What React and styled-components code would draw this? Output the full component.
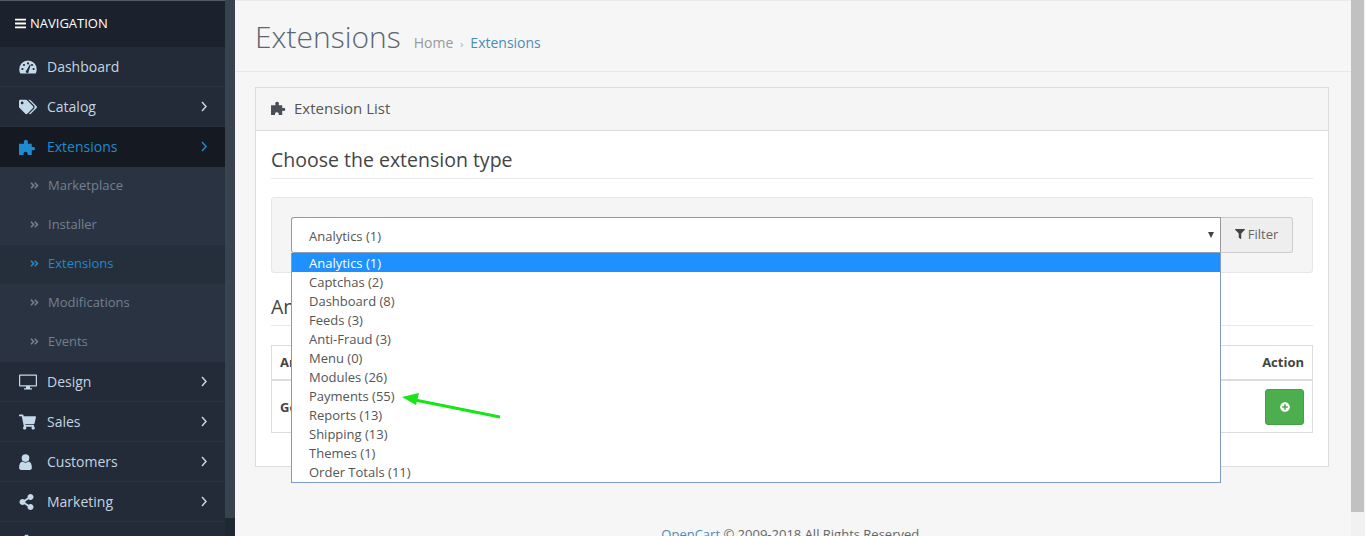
import React from 'react';
import styled, { createGlobalStyle } from 'styled-components';
import { FaTags, FaShoppingCart, FaShareAlt, FaCog, FaBars, FaAngleDoubleRight, FaFilter, FaPlusCircle } from 'react-icons/fa';

const GlobalStyle = createGlobalStyle`
  html, body {
    margin: 0;
    padding: 0;
    height: 536px;
    overflow: hidden;
    background: #f6f6f6;
    font-family: "Open Sans", sans-serif;
    font-size: 12px;
    color: #666;
  }
`;

const Page = styled.div`
  display: flex;
  width: 1365px;
  height: 536px;
  overflow: hidden;
`;

const Sidebar = styled.aside`
  width: 235px;
  flex: none;
  display: flex;
  background: #1f2733;
`;

const SideColumn = styled.nav`
  width: 225px;
  flex: none;
`;

const SideScroll = styled.div`
  width: 10px;
  height: 518px;
  background: #38434f;
`;

const NavHead = styled.div`
  height: 47px;
  display: flex;
  align-items: center;
  gap: 4px;
  padding: 0 0 2px 15px;
  box-sizing: border-box;
  background: #1b222d;
  border-top: 1px solid #555b63;
  color: #fff;
  font-size: 13px;
  svg { width: 11px; height: 13px; }
`;

const MenuItem = styled.div`
  height: 40px;
  box-sizing: border-box;
  display: flex;
  align-items: center;
  padding: 0 18px 0 19px;
  font-size: 14px;
  background: ${p => (p.$active ? '#151a22' : '#222b37')};
  border-bottom: 1px solid ${p => (p.$active ? '#151a22' : '#293340')};
  color: ${p => (p.$active ? '#1e8ad0' : '#c4d4e2')};
`;

const MenuIcon = styled.span`
  width: 28px;
  flex: none;
  display: flex;
  align-items: center;
  color: ${p => (p.$active ? '#1e8ad0' : '#c4d9ea')};
  svg { width: ${p => p.$width || 18}px; height: 16px; }
`;

const MenuLabel = styled.span`
  flex: 1;
`;

const SubItem = styled.div`
  height: 39px;
  box-sizing: border-box;
  display: flex;
  align-items: center;
  gap: 9px;
  padding: 0 0 3px 30px;
  font-size: 13px;
  background: ${p => (p.$active ? '#252e3b' : '#2a3342')};
  color: ${p => (p.$active ? '#1e8ad0' : '#73808f')};
  svg { width: 9px; height: 11px; }
`;

const Main = styled.main`
  flex: 1;
  min-width: 0;
  display: flex;
  flex-direction: column;
`;

const Header = styled.header`
  height: 71px;
  flex: none;
  box-sizing: border-box;
  padding: 15px 0 0 20px;
  display: flex;
  align-items: baseline;
  border-top: 1px solid #eaeaea;
  gap: 13px;
`;

const Title = styled.h1`
  margin: 0;
  font-size: 30px;
  line-height: 42px;
  font-weight: 300;
  color: #5c6670;
`;

const Crumbs = styled.div`
  display: flex;
  align-items: baseline;
  gap: 7px;
  font-size: 14px;
  color: #999;
`;

const CrumbLink = styled.a`
  color: #4c8cb8;
`;

const Sep = styled.span`
  font-size: 10px;
  color: #aaa;
`;

const Content = styled.div`
  flex: 1;
  border-top: 1px solid #e8e8e8;
  padding: 15px 36px 0 20px;
`;

const Panel = styled.section`
  height: 380px;
  box-sizing: border-box;
  border: 1px solid #dcdcdc;
  background: #fff;
  position: relative;
`;

const PanelHead = styled.div`
  height: 43px;
  box-sizing: border-box;
  display: flex;
  align-items: center;
  gap: 8px;
  padding: 0 0 2px 15px;
  background: #f5f5f5;
  border-bottom: 1px solid #dcdcdc;
  font-size: 15px;
  color: #555;
  svg { width: 15px; height: 14px; color: #4a4f57; }
`;

const PanelBody = styled.div`
  padding: 15px 15px 0;
`;

const SectionTitle = styled.h3`
  margin: 0;
  height: 33px;
  box-sizing: border-box;
  font-size: 19.5px;
  line-height: 27px;
  font-weight: 400;
  color: #444;
  border-bottom: 1px solid #e8e8e8;
`;

const Well = styled.div`
  margin-top: 18px;
  height: 76px;
  box-sizing: border-box;
  padding: 19px;
  display: flex;
  background: #f5f5f5;
  border: 1px solid #e6e6e6;
  border-radius: 3px;
`;

const SelectWrap = styled.div`
  width: 930px;
  flex: none;
  position: relative;
`;

const SelectBox = styled.div`
  height: 36px;
  box-sizing: border-box;
  display: flex;
  align-items: center;
  justify-content: space-between;
  padding: 2px 6px 0 17px;
  background: #fff;
  border: 1px solid #999;
  border-bottom-color: #8f9fb8;
  border-radius: 3px 0 0 3px;
  color: #555;
  font-size: 13px;
`;

const Caret = styled.svg`
  width: 6px;
  height: 6px;
  margin-bottom: 2px;
  color: #444;
`;

const OptionList = styled.ul`
  position: absolute;
  top: 36px;
  left: 0;
  right: 0;
  z-index: 5;
  margin: 0;
  padding: 0 0 1px;
  list-style: none;
  background: #fff;
  border: 1px solid #7f9bc4;
  border-top: 0;
`;

const Option = styled.li`
  height: 19px;
  line-height: 21px;
  padding-left: 17px;
  font-size: 13px;
  color: ${p => (p.$selected ? '#fff' : '#555')};
  background: ${p => (p.$selected ? '#1e90ff' : 'transparent')};
`;

const FilterButton = styled.button`
  width: 72px;
  height: 36px;
  padding: 0 0 2px;
  display: flex;
  align-items: center;
  justify-content: center;
  gap: 3px;
  background: #eeeeee;
  border: 1px solid #ccc;
  border-left: 0;
  border-radius: 0 3px 3px 0;
  font-family: inherit;
  font-size: 13px;
  color: #666;
  svg { width: 10px; height: 10px; color: #444; }
`;

const SubTitle = styled(SectionTitle)`
  margin-top: 20px;
`;

const Table = styled.div`
  margin-top: 19px;
  border: 1px solid #ddd;
`;

const TableHead = styled.div`
  height: 35px;
  box-sizing: border-box;
  display: flex;
  align-items: center;
  justify-content: space-between;
  padding: 0 8px 2px;
  border-bottom: 2px solid #ddd;
  font-weight: 700;
  font-size: 13px;
  color: #444;
`;

const TableRow = styled.div`
  height: 51px;
  box-sizing: border-box;
  display: flex;
  align-items: center;
  justify-content: space-between;
  padding: 1px 8px 0;
  font-weight: 700;
  font-size: 13px;
  color: #444;
`;

const AddButton = styled.button`
  width: 39px;
  height: 36px;
  padding: 0;
  display: flex;
  align-items: center;
  justify-content: center;
  background: #4cae4c;
  border: 1px solid #43a047;
  border-radius: 3px;
  color: #fff;
  svg { width: 10px; height: 10px; }
`;

const Annotation = styled.svg`
  position: absolute;
  left: 395px;
  top: 390px;
  z-index: 6;
`;

const Footer = styled.footer`
  margin-top: 59px;
  text-align: center;
  font-size: 13px;
  line-height: 17px;
  color: #666;
  a { color: #4c8cb8; text-decoration: underline; }
`;

const ScrollTrack = styled.div`
  position: absolute;
  left: 1351px;
  top: 0;
  width: 14px;
  height: 536px;
  background: #f1f1f1;
  z-index: 7;
`;

const ScrollThumb = styled.div`
  width: 13px;
  height: 512px;
  background: #c1c1c1;
`;

const Chevron = styled.svg`
  width: 6px;
  height: 11px;
  fill: none;
  stroke: currentColor;
  stroke-width: 1.5;
`;

const ChevronIcon = () => (
  <Chevron viewBox="0 0 6 11"><path d="M1 1l4 4.5-4 4.5" /></Chevron>
);

const PuzzleIcon = () => (
  <svg viewBox="0 0 16 15" fill="currentColor">
    <path d="M0 4.5H4.7V3.6A2 2 0 1 1 8.3 3.6V4.5H12V7.5H13a1.6 1.6 0 1 1 0 3H12V15H8.2V13.5a2 2 0 0 0-3.9 0V15H0Z" />
  </svg>
);

const GaugeIcon = () => (
  <svg viewBox="0 0 18 14" fill="currentColor">
    <path d="M9 .5A8.7 8.7 0 0 0 .3 9.2c0 1.8.4 3.2 1.2 4.3h15c.8-1.1 1.2-2.5 1.2-4.3A8.7 8.7 0 0 0 9 .5z" />
    <g fill="#222b37">
      <circle cx="3.4" cy="9" r="1.1" />
      <circle cx="5" cy="5" r="1.1" />
      <circle cx="9" cy="3.4" r="1.1" />
      <circle cx="13" cy="5" r="1.1" />
      <circle cx="14.6" cy="9" r="1.1" />
      <path d="M7.6 10.2L10.8 4.6l.9.4-2 6.2a1.5 1.5 0 1 1-2.1-1z" />
    </g>
  </svg>
);

const MonitorIcon = () => (
  <svg viewBox="0 0 18 15" fill="currentColor" fillRule="evenodd">
    <path d="M1 0h16a1 1 0 0 1 1 1v10a1 1 0 0 1-1 1h-6v1.8h2V15H5v-1.2h2V12H1a1 1 0 0 1-1-1V1a1 1 0 0 1 1-1zM1.2 1.2v9.6h15.6V1.2z" />
  </svg>
);

const PersonIcon = () => (
  <svg viewBox="0 0 12 15" fill="currentColor">
    <circle cx="6" cy="3.8" r="3.6" />
    <path d="M0 13c0-3.5 1-5.500 3-6 .8.7 1.800 1.100 3 1.100s2.200-.4 3-1.100c2 .5 3 2.500 3 6 0 1.300-.9 2-2 2H2c-1.100 0-2-.7-2-2z" />
  </svg>
);

const mainMenu = [
  { label: 'Design', icon: <MonitorIcon /> },
  { label: 'Sales', icon: <FaShoppingCart />, width: 17 },
  { label: 'Customers', icon: <PersonIcon />, width: 13 },
  { label: 'Marketing', icon: <FaShareAlt />, width: 15 },
  { label: 'System', icon: <FaCog />, width: 15 },
];

const subMenu = ['Marketplace', 'Installer', 'Extensions', 'Modifications', 'Events'];

const options = [
  'Analytics (1)', 'Captchas (2)', 'Dashboard (8)', 'Feeds (3)', 'Anti-Fraud (3)', 'Menu (0)',
  'Modules (26)', 'Payments (55)', 'Reports (13)', 'Shipping (13)', 'Themes (1)', 'Order Totals (11)',
];

export default function App() {
  return (
    <Page>
      <GlobalStyle />
      <Sidebar>
        <SideColumn>
          <NavHead><FaBars />NAVIGATION</NavHead>
          <MenuItem>
            <MenuIcon><GaugeIcon /></MenuIcon>
            <MenuLabel>Dashboard</MenuLabel>
          </MenuItem>
          <MenuItem>
            <MenuIcon><FaTags /></MenuIcon>
            <MenuLabel>Catalog</MenuLabel>
            <ChevronIcon />
          </MenuItem>
          <MenuItem $active>
            <MenuIcon $active $width={17}><PuzzleIcon /></MenuIcon>
            <MenuLabel>Extensions</MenuLabel>
            <ChevronIcon />
          </MenuItem>
          {subMenu.map(name => (
            <SubItem key={name} $active={name === 'Extensions'}>
              <FaAngleDoubleRight />{name}
            </SubItem>
          ))}
          {mainMenu.map(item => (
            <MenuItem key={item.label}>
              <MenuIcon $width={item.width}>{item.icon}</MenuIcon>
              <MenuLabel>{item.label}</MenuLabel>
              <ChevronIcon />
            </MenuItem>
          ))}
        </SideColumn>
        <SideScroll />
      </Sidebar>
      <Main>
        <Header>
          <Title>Extensions</Title>
          <Crumbs>
            <span>Home</span>
            <Sep>›</Sep>
            <CrumbLink>Extensions</CrumbLink>
          </Crumbs>
        </Header>
        <Content>
          <Panel>
            <PanelHead><PuzzleIcon />Extension List</PanelHead>
            <PanelBody>
              <SectionTitle>Choose the extension type</SectionTitle>
              <Well>
                <SelectWrap>
                  <SelectBox>
                    Analytics (1)
                    <Caret viewBox="0 0 6 6"><path d="M0 0h6L3 6z" fill="currentColor" /></Caret>
                  </SelectBox>
                  <OptionList>
                    {options.map((o, i) => (
                      <Option key={o} $selected={i === 0}>{o}</Option>
                    ))}
                  </OptionList>
                </SelectWrap>
                <FilterButton><FaFilter />Filter</FilterButton>
              </Well>
              <SubTitle>Analytics List</SubTitle>
              <Table>
                <TableHead><span>Analytics Name</span><span>Action</span></TableHead>
                <TableRow>
                  <span>Google Analytics</span>
                  <AddButton><FaPlusCircle /></AddButton>
                </TableRow>
              </Table>
            </PanelBody>
          </Panel>
          <Footer><a>OpenCart</a> © 2009-2018 All Rights Reserved.</Footer>
        </Content>
      </Main>
      <ScrollTrack><ScrollThumb /></ScrollTrack>
      <Annotation width="105" height="32" viewBox="0 0 105 32">
        <path d="M105 27 L20 10" stroke="#16e516" strokeWidth="3" fill="none" />
        <path d="M7 7 L24 3 L21 15 z" fill="#16e516" />
      </Annotation>
    </Page>
  );
}
